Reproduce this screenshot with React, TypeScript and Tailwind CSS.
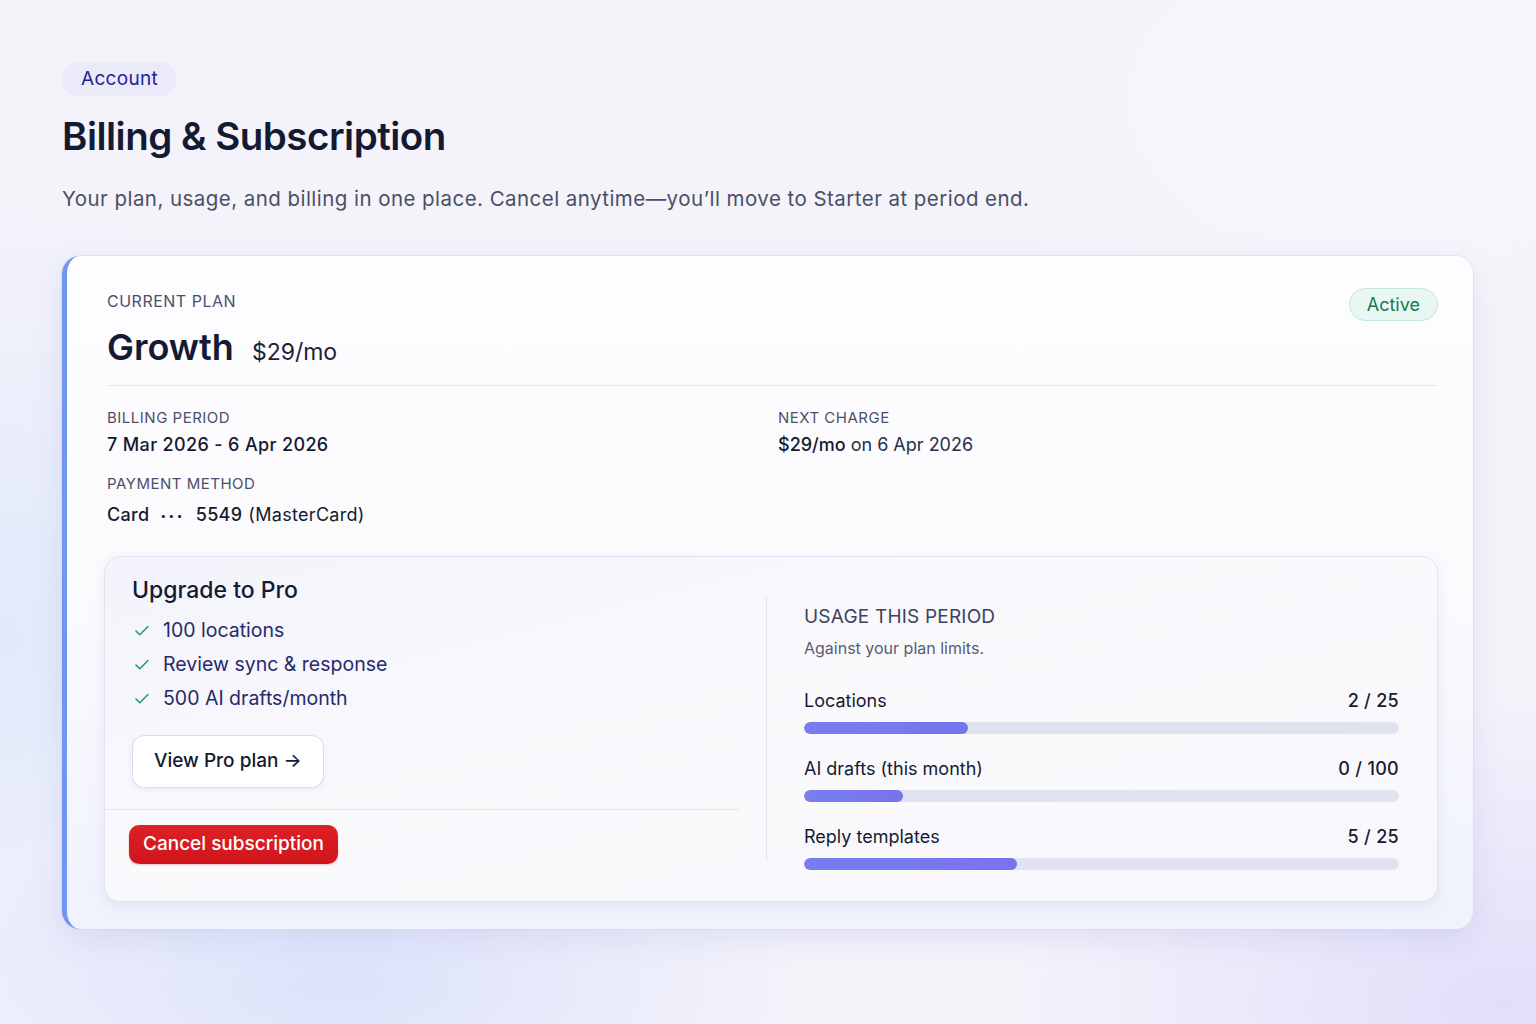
import React from "react";
import { Check } from "lucide-react";

type Usage = { label: string; value: string; pct: number };

const usage: Usage[] = [
  { label: "Locations", value: "2 / 25", pct: 27.5 },
  { label: "AI drafts (this month)", value: "0 / 100", pct: 16.7 },
  { label: "Reply templates", value: "5 / 25", pct: 35.8 },
];

const perks = ["100 locations", "Review sync & response", "500 AI drafts/month"];

const UsageRow = ({ item, first }: { item: Usage; first?: boolean }) => (
  <div className={first ? "mt-[30px]" : "mt-[23px]"}>
    <div className="flex items-center justify-between text-[18px] leading-[24px] text-[#161b33]">
      <span>{item.label}</span>
      <span className="font-medium tracking-[0.3px]">{item.value}</span>
    </div>
    <div className="mt-[9px] h-[12px] w-full rounded-full bg-[#e0e2ef] overflow-hidden">
      <div
        className="h-full rounded-full bg-gradient-to-r from-[#7a7cf0] to-[#7674ee]"
        style={{ width: `${item.pct}%` }}
      />
    </div>
  </div>
);

export default function App() {
  return (
    <main className="min-h-[1024px] w-full bg-[#f4f3fa] bg-[radial-gradient(ellipse_30%_42%_at_0%_62%,#e1e9fb_0%,transparent_100%),radial-gradient(ellipse_30%_18%_at_22%_96%,#dce2fb_0%,transparent_100%),radial-gradient(ellipse_32%_30%_at_98%_98%,#e2defa_0%,transparent_100%),radial-gradient(ellipse_30%_30%_at_90%_10%,#f7f6fc_0%,transparent_100%)] font-['Inter','Liberation_Sans',sans-serif] antialiased">
      <div className="pl-[62px] pr-[63px] pt-[62px] pb-[96px]">
        <span className="inline-flex h-[34px] items-center rounded-full bg-[#ebeaf8] px-[19px] text-[19px] tracking-[0.3px] text-[#23229a]">
          Account
        </span>
        <h1 className="mt-[16px] text-[38.5px] leading-[48px] font-semibold tracking-[-0.5px] text-[#141a33]">
          Billing &amp; Subscription
        </h1>
        <p className="mt-[25px] text-[20.5px] leading-[28px] text-[#4a4f66] tracking-[0.45px]">
          Your plan, usage, and billing in one place. Cancel anytime—you’ll move to Starter at period end.
        </p>

        <section className="mt-[43px] rounded-[18px] border-l-[5px] border-l-[#7096ef] bg-gradient-to-b from-[#fdfcff] via-[#fbfbfe] to-[#f0f2fc] pl-[40px] pr-[35px] pt-[35px] pb-[27px] shadow-[0_10px_30px_rgba(90,100,190,0.12),0_0_0_1px_rgba(225,228,245,0.8)]">
          <div className="flex items-start justify-between">
            <div>
              <div className="text-[16px] leading-[20px] tracking-[0.5px] text-[#4b5068]">CURRENT PLAN</div>
              <div className="mt-[14px] flex items-baseline gap-[18px]">
                <span className="text-[36px] leading-[44px] font-semibold text-[#141a33]">Growth</span>
                <span className="text-[23px] text-[#1c2138]">$29/mo</span>
              </div>
            </div>
            <span className="mt-[-3px] inline-flex h-[33px] items-center rounded-full border border-[#c2e8db] bg-[#e9f7f2] px-[17px] text-[18px] text-[#167a56]">
              Active
            </span>
          </div>

          <div className="mt-[15px] h-px w-full bg-[#e6e7f1]" />

          <div className="mt-[22px] grid grid-cols-2 gap-x-[11px]">
            <div>
              <div className="text-[15px] leading-[20px] tracking-[0.5px] text-[#4b5068]">BILLING PERIOD</div>
              <div className="mt-[4px] text-[18px] leading-[26px] font-medium tracking-[0.35px] text-[#151a30]">7 Mar 2026 - 6 Apr 2026</div>
              <div className="mt-[16px] text-[15px] leading-[20px] tracking-[0.5px] text-[#4b5068]">PAYMENT METHOD</div>
              <div className="mt-[8px] flex items-center text-[18px] leading-[26px] tracking-[0.3px] text-[#151a30]">
                <span className="font-medium">Card</span>
                <span className="mx-[11px] text-[10px] tracking-[2.5px]">•••</span>
                <span className="font-medium">5549</span>
                <span className="ml-[6px]">(MasterCard)</span>
              </div>
            </div>
            <div>
              <div className="text-[15px] leading-[20px] tracking-[0.5px] text-[#4b5068]">NEXT CHARGE</div>
              <div className="mt-[4px] text-[18px] leading-[26px] text-[#2a2f48]">
                <span className="font-medium text-[#151a30]">$29/mo</span> on 6 Apr 2026
              </div>
            </div>
          </div>

          <div className="ml-[-3px] mt-[28px] flex rounded-[16px] border border-[#e1e3f1] bg-gradient-to-br from-[#f3f3fb] via-[#fafafd] to-[#f7f7fc] pl-[27px] pr-[38px] shadow-[0_4px_14px_rgba(80,90,170,0.10)]">
            <div className="w-[607px] shrink-0 pt-[19px] pb-[36px]">
              <h2 className="text-[23px] leading-[28px] font-medium text-[#141a33]">Upgrade to Pro</h2>
              <ul className="mt-[10px]">
                {perks.map((p) => (
                  <li key={p} className="flex h-[34px] items-center text-[19.5px] text-[#252a6b]">
                    <Check className="ml-[1px] mr-[12px] h-[18px] w-[18px] text-[#1f9a66]" strokeWidth={2} />
                    {p}
                  </li>
                ))}
              </ul>
              <button className="mt-[19px] h-[53px] rounded-[12px] border border-[#d9dbe9] bg-white px-[21px] text-[19px] font-medium text-[#151a30] shadow-[0_2px_6px_rgba(80,90,160,0.08)]">
                View Pro plan →
              </button>
              <div className="ml-[-28px] mt-[21px] h-px bg-[#e4e5f0]" />
              <button className="ml-[-3px] mt-[15px] h-[39px] rounded-[10px] bg-gradient-to-b from-[#de2027] to-[#cf151b] px-[14px] text-[19px] font-medium text-white shadow-[0_1px_2px_rgba(150,20,20,0.25)]">
                Cancel subscription
              </button>
            </div>
            <div className="ml-[27px] my-[40px] w-px bg-[#e5e6f1]" />
            <div className="ml-[37px] flex-1 pt-[48px] pb-[31px]">
              <div className="text-[19px] leading-[24px] tracking-[0.2px] text-[#3d4260]">USAGE THIS PERIOD</div>
              <div className="mt-[8px] text-[16px] leading-[22px] text-[#575c74]">Against your plan limits.</div>
              {usage.map((u, i) => (
                <UsageRow key={u.label} item={u} first={i === 0} />
              ))}
            </div>
          </div>
        </section>
      </div>
    </main>
  );
}
